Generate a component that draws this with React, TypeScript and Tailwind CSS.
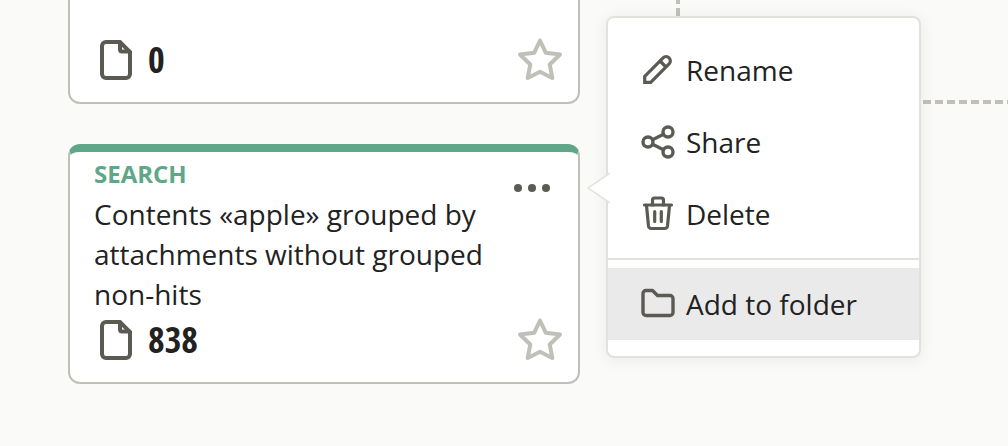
import type { ReactNode } from 'react';

const iconProps = {
    fill: 'none',
    stroke: 'currentColor',
    strokeLinecap: 'round',
    strokeLinejoin: 'round',
} as const;

function FileIcon() {
    return (
        <svg viewBox="0 0 32 40" className="w-8 h-10 text-[#5b5a53]" {...iconProps} strokeWidth="4">
            <path d="M20 2H6a4 4 0 0 0-4 4v28a4 4 0 0 0 4 4h20a4 4 0 0 0 4-4V12Z" strokeLinejoin="miter" />
            <path d="M20 3v6.500a2 2 0 0 0 2 2h7" />
        </svg>
    );
}

function StarIcon() {
    return (
        <svg viewBox="0 0 44 44" className="w-11 h-11 text-[#c0c0b9]" {...iconProps} strokeWidth="4">
            <path d="M22 2.500l5.800 12.300 14.200 1.700-10.300 10 2.600 13.500-12.300-6.300-12.300 6.300 2.600-13.500L2 16.500l14.200-1.700Z" />
        </svg>
    );
}

function PencilIcon() {
    return (
        <svg viewBox="0 0 36 36" className="w-9 h-9" {...iconProps} strokeWidth="3.200">
            <path d="M4.700 30.300v-6L23.100 5.900a4.200 4.200 0 0 1 6 6L10.700 30.300Z" strokeLinejoin="miter" />
            <path d="M20 9l6 6" strokeLinecap="butt" />
        </svg>
    );
}

function ShareIcon() {
    return (
        <svg viewBox="0 0 36 36" className="w-9 h-9" {...iconProps} strokeWidth="3.400">
            <circle cx="8" cy="18" r="5" />
            <circle cx="28" cy="8" r="5" />
            <circle cx="28" cy="28" r="5" />
            <path d="M12.500 15.700l11-5.400M12.500 20.300l11 5.400" />
        </svg>
    );
}

function TrashIcon() {
    return (
        <svg viewBox="0 0 36 36" className="w-9 h-9" {...iconProps} strokeWidth="3.200">
            <path d="M4.500 9h27" />
            <path d="M12.500 9V4a2 2 0 0 1 2-2h7a2 2 0 0 1 2 2v5" />
            <path d="M6.500 9.500l2 20.500a3 3 0 0 0 3 2.500h13a3 3 0 0 0 3-2.500l2-20.500" />
            <path d="M14.700 15.500v10M21.300 15.500v10" />
        </svg>
    );
}

function FolderIcon() {
    return (
        <svg viewBox="0 0 36 36" className="w-9 h-9" {...iconProps} strokeWidth="3.400">
            <path d="M3 7.500a3 3 0 0 1 3-3h6.500l5 5H30a3 3 0 0 1 3 3v14a3 3 0 0 1-3 3H6a3 3 0 0 1-3-3Z" />
        </svg>
    );
}

function CardFooter({ count }: { count: number }) {
    return (
        <div className="mt-1 flex items-center justify-between pl-1.5">
            <div className="flex items-center gap-4">
                <FileIcon />
                <span className="font-['Open_Sans_Condensed','Noto_Sans_Condensed','Roboto_Condensed','Open_Sans',sans-serif] text-4xl font-bold">{count}</span>
            </div>
            <button type="button" aria-label="Favorite">
                <StarIcon />
            </button>
        </div>
    );
}

function MenuItem({ icon, label, active }: { icon: ReactNode; label: string; active?: boolean }) {
    return (
        <button
            type="button"
            role="menuitem"
            className={`flex h-18 w-full items-center gap-2.5 pl-8 text-left ${active ? 'bg-[#eaeaea]' : ''}`}
        >
            <span className="text-[#5b5a53]">{icon}</span>
            {label}
        </button>
    );
}

function ContextMenu() {
    return (
        <div
            role="menu"
            className="absolute left-full -top-38 ml-10.5 w-[315px] rounded-lg border-2 border-[#e2e2dd] bg-white pt-4 pb-4 shadow-[0_2px_16px_rgba(0,0,0,0.07)]"
        >
            <svg viewBox="0 0 24 32" className="absolute -left-5.5 top-38.5 h-8 w-6" aria-hidden="true">
                <path d="M24 1L2 16l22 15Z" fill="#fff" />
                <path d="M24 1L2 16l22 15" fill="none" stroke="#e2e2dd" strokeWidth="1.500" />
            </svg>
            <MenuItem icon={<PencilIcon />} label="Rename" />
            <MenuItem icon={<ShareIcon />} label="Share" />
            <MenuItem icon={<TrashIcon />} label="Delete" />
            <hr className="mt-2 mb-2 border-t-2 border-[#e2e2dd]" />
            <MenuItem icon={<FolderIcon />} label="Add to folder" active />
        </div>
    );
}

export default function App() {
    return (
        <main className="flex min-h-screen items-start overflow-hidden bg-[#fafaf8] pl-17 font-['Open_Sans',sans-serif] text-[28px] leading-10 text-[#22221f] antialiased">
            <div className="flex w-lg shrink-0 flex-col gap-10">
                <article className="rounded-b-xl border-2 border-t-0 border-[#c0c0b9] bg-white pt-8.5 pr-4 pb-5 pl-6">
                    <CardFooter count={0} />
                </article>

                <article className="rounded-xl border-2 border-t-8 border-[#c0c0b9] border-t-[#60a78a] bg-white pt-0.5 pr-4 pb-5 pl-6">
                    <div className="flex items-start">
                        <div className="flex-1">
                            <h3 className="text-2xl leading-10 font-bold text-[#60a78a]">SEARCH</h3>
                            <p>Contents «apple» grouped by attachments without grouped non-hits</p>
                        </div>
                        <div className="relative -mr-0.5 mt-3.5">
                            <button type="button" aria-label="More actions" aria-haspopup="menu" className="flex h-10 w-16 items-center justify-center">
                                <svg viewBox="0 0 36 8" className="h-2 w-9 fill-[#5b5a53]">
                                    <circle cx="4" cy="4" r="4" />
                                    <circle cx="18" cy="4" r="4" />
                                    <circle cx="32" cy="4" r="4" />
                                </svg>
                            </button>
                            <ContextMenu />
                        </div>
                    </div>
                    <CardFooter count={838} />
                </article>
            </div>

            {/* dashed connector to the next column */}
            <div className="ml-24 flex flex-1 flex-col">
                <div className="h-25 w-1 bg-[repeating-linear-gradient(to_bottom,#c0c0b9_0_4px,transparent_4px_8px,#c0c0b9_8px_12px)]" />
                <div className="h-1 bg-[repeating-linear-gradient(to_right,#c0c0b9_0_3px,transparent_3px_7px,#c0c0b9_7px_12px)]" />
            </div>
        </main>
    );
}
